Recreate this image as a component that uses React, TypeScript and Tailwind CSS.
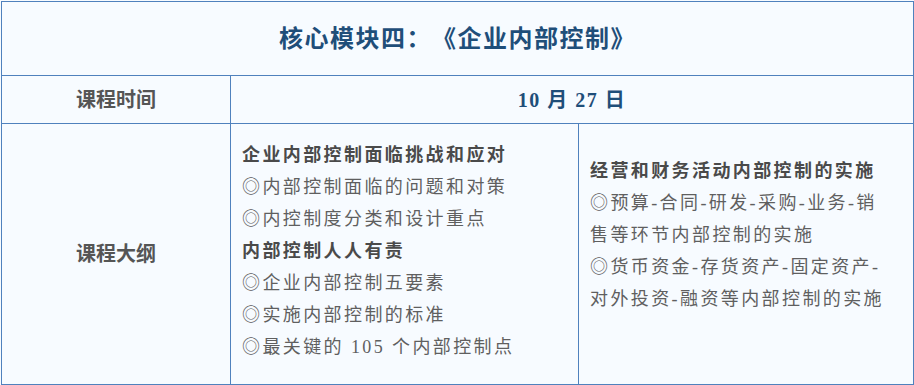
import React from 'react';

const cjk = "font-['Liberation_Serif','Noto_Sans_CJK_SC',serif] [text-spacing-trim:space-all]";

const leftLines = [
  { text: '企业内部控制面临挑战和应对', bold: true },
  { text: '◎内部控制面临的问题和对策' },
  { text: '◎内控制度分类和设计重点' },
  { text: '内部控制人人有责', bold: true },
  { text: '◎企业内部控制五要素' },
  { text: '◎实施内部控制的标准' },
  { text: '◎最关键的 105 个内部控制点' },
];

const rightLines = [
  { text: '经营和财务活动内部控制的实施', bold: true },
  { text: '◎预算-合同-研发-采购-业务-销' },
  { text: '售等环节内部控制的实施' },
  { text: '◎货币资金-存货资产-固定资产-' },
  { text: '对外投资-融资等内部控制的实施' },
];

function Lines({ lines }: { lines: { text: string; bold?: boolean }[] }) {
  return (
    <div className="flex flex-col">
      {lines.map((l, i) => (
        <div
          key={i}
          className={`h-[32px] leading-[32px] whitespace-nowrap text-[18px] tracking-[2.4px] ${
            l.bold ? 'font-bold text-[#4a4a4a]' : 'text-[#5f5f5f]'
          }`}
        >
          {l.text}
        </div>
      ))}
    </div>
  );
}

export default function App() {
  return (
    <div className={`w-[914px] h-[385px] bg-[#f7fbff] pt-px pl-px ${cjk}`}>
      <div className="w-[913px] h-[384px] border border-[#4f81bd] flex flex-col">
        {/* Title */}
        <div className="h-[74px] flex items-center justify-center border-b border-[#4f81bd]">
          <span className="text-[24px] font-bold text-[#1f4e79] tracking-[1.5px]">
            核心模块四：《企业内部控制》
          </span>
        </div>

        {/* Time row */}
        <div className="h-[48px] flex border-b border-[#4f81bd]">
          <div className="w-[229px] flex items-center justify-center border-r border-[#4f81bd] text-[20px] font-bold text-[#555]">
            课程时间
          </div>
          <div className="flex-1 flex items-center justify-center text-[20px] font-bold text-[#1f4e79] tracking-[1.5px]">
            10 月 27 日
          </div>
        </div>

        {/* Outline row */}
        <div className="flex-1 flex">
          <div className="w-[229px] flex items-center justify-center border-r border-[#4f81bd] text-[20px] font-bold text-[#555]">
            课程大纲
          </div>
          <div className="w-[348px] border-r border-[#4f81bd] pl-[11px] pt-[15px]">
            <Lines lines={leftLines} />
          </div>
          <div className="flex-1 pl-[11px] pt-[31px]">
            <Lines lines={rightLines} />
          </div>
        </div>
      </div>
    </div>
  );
}
